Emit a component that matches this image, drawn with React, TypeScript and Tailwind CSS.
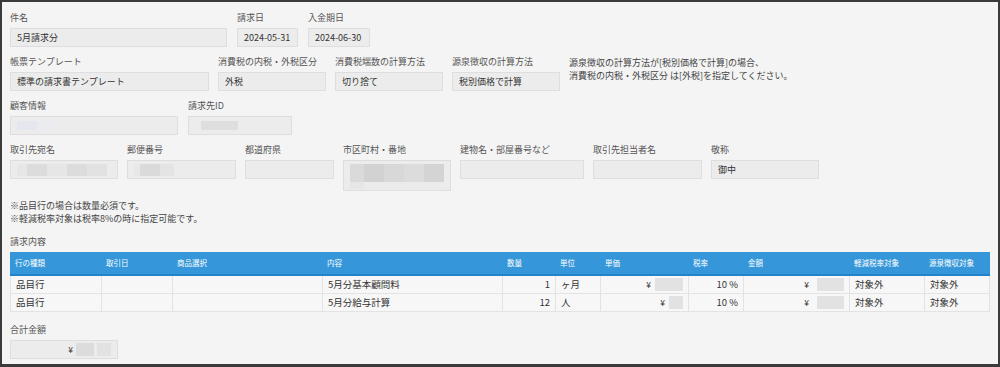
import React from "react";

const font = { fontFamily: '"Noto Sans CJK JP", "Noto Sans", sans-serif' };

function Label({ children }: { children: React.ReactNode }) {
  return <div className="h-[14px] leading-[14px] text-[9px] text-[#555] whitespace-nowrap">{children}</div>;
}

function Field({
  label,
  w,
  children,
  tall,
}: {
  label: string;
  w: string;
  children?: React.ReactNode;
  tall?: boolean;
}) {
  return (
    <div className={`flex flex-col gap-[3px] ${w}`}>
      <Label>{label}</Label>
      <div
        className={`${tall ? "h-[31px] items-start pt-[3px]" : "h-[19px] items-center"} flex bg-[#ececec] border border-[#dedede] px-[6px] text-[9px] text-[#333] whitespace-nowrap overflow-hidden`}
      >
        {children}
      </div>
    </div>
  );
}

function Blur({ w, h, c = "#dcdcdc" }: { w: string; h: string; c?: string }) {
  return <div className={`${w} ${h} shrink-0`} style={{ background: c }} />;
}

const cols = [
  "w-[91px]",
  "w-[71px]",
  "w-[150px]",
  "w-[180px]",
  "w-[53px]",
  "w-[45px]",
  "w-[88px]",
  "w-[55px]",
  "w-[106px]",
  "w-[75px]",
  "flex-1",
];

const headers = [
  "行の種類",
  "取引日",
  "商品選択",
  "内容",
  "数量",
  "単位",
  "単価",
  "税率",
  "金額",
  "軽減税率対象",
  "源泉徴収対象",
];

function Row({ content, qty, unit, short }: { content: string; qty: string; unit: string; short?: boolean }) {
  const cell = "h-full flex items-center px-[5px] border-r border-[#e3e3e3] text-[9.5px] text-[#333] whitespace-nowrap";
  return (
    <div className="flex h-[18px] border-b border-l border-[#e3e3e3] bg-[#f7f7f7]">
      <div className={`${cols[0]} ${cell}`}>品目行</div>
      <div className={`${cols[1]} ${cell}`}></div>
      <div className={`${cols[2]} ${cell}`}></div>
      <div className={`${cols[3]} ${cell}`}>{content}</div>
      <div className={`${cols[4]} ${cell} justify-end`}>{qty}</div>
      <div className={`${cols[5]} ${cell}`}>{unit}</div>
      <div className={`${cols[6]} ${cell} justify-end gap-[4px]`}>
        <span className="text-[8.5px]">¥</span>
        <Blur w={short ? "w-[14px]" : "w-[28px]"} h="h-[13px]" c="#e2e2e2" />
      </div>
      <div className={`${cols[7]} ${cell} justify-end`}>10 %</div>
      <div className={`${cols[8]} ${cell} justify-end gap-[8px]`}>
        <span className="text-[8.5px]">¥</span>
        <Blur w="w-[27px]" h="h-[13px]" c="#e2e2e2" />
      </div>
      <div className={`${cols[9]} ${cell}`}>対象外</div>
      <div className={`${cols[10]} ${cell}`}>対象外</div>
    </div>
  );
}

export default function App() {
  return (
    <div
      className="w-[1000px] h-[367px] bg-[#f4f4f4] border-2 border-b-[3px] border-[#3a3a3a] overflow-hidden pl-[8px] pt-[9px] pr-[8px]"
      style={font}
    >
      {/* Row 1 */}
      <div className="flex gap-[10px]">
        <Field label="件名" w="w-[217px]">5月請求分</Field>
        <Field label="請求日" w="w-[61px]">2024-05-31</Field>
        <Field label="入金期日" w="w-[62px]">2024-06-30</Field>
      </div>

      {/* Row 2 */}
      <div className="flex gap-[9px] mt-[8px]">
        <Field label="帳票テンプレート" w="w-[199px]">標準の請求書テンプレート</Field>
        <Field label="消費税の内税・外税区分" w="w-[108px]">外税</Field>
        <Field label="消費税端数の計算方法" w="w-[108px]">切り捨て</Field>
        <Field label="源泉徴収の計算方法" w="w-[108px]">税別価格で計算</Field>
        <div className="text-[9px] leading-[13px] text-[#444] pt-[1px] whitespace-nowrap">
          <div>源泉徴収の計算方法が[税別価格で計算]の場合、</div>
          <div>消費税の内税・外税区分 は[外税]を指定してください。</div>
        </div>
      </div>

      {/* Row 3 */}
      <div className="flex gap-[10px] mt-[8px]">
        <Field label="顧客情報" w="w-[168px]">
          <div className="flex">
            <Blur w="w-[20px]" h="h-[9px]" c="#e4e8ee" />
            <Blur w="w-[20px]" h="h-[9px]" c="#eaecef" />
          </div>
        </Field>
        <Field label="請求先ID" w="w-[104px]">
          <div className="flex pl-[6px]">
            <Blur w="w-[37px]" h="h-[9px]" c="#dedede" />
          </div>
        </Field>
      </div>

      {/* Row 4 */}
      <div className="flex gap-[9px] mt-[8px] items-start">
        <Field label="取引先宛名" w="w-[108px]">
          <div className="flex">
            <Blur w="w-[10px]" h="h-[12px]" c="#e6e6e6" />
            <Blur w="w-[20px]" h="h-[12px]" c="#dcdcdc" />
            <Blur w="w-[20px]" h="h-[12px]" c="#e6e6e6" />
            <Blur w="w-[20px]" h="h-[12px]" c="#dcdcdc" />
            <Blur w="w-[20px]" h="h-[12px]" c="#e2e2e2" />
          </div>
        </Field>
        <Field label="郵便番号" w="w-[109px]">
          <div className="flex">
            <Blur w="w-[6px]" h="h-[12px]" c="#e8e8e8" />
            <Blur w="w-[20px]" h="h-[12px]" c="#dadada" />
            <Blur w="w-[14px]" h="h-[12px]" c="#e4e4e4" />
          </div>
        </Field>
        <Field label="都道府県" w="w-[89px]"></Field>
        <Field label="市区町村・番地" w="w-[108px]" tall>
          <div className="flex flex-col">
            <div className="flex">
              <Blur w="w-[14px]" h="h-[18px]" c="#dadada" />
              <Blur w="w-[20px]" h="h-[18px]" c="#d2d2d2" />
              <Blur w="w-[20px]" h="h-[18px]" c="#d8d8d8" />
              <Blur w="w-[20px]" h="h-[18px]" c="#dcdcdc" />
              <Blur w="w-[20px]" h="h-[18px]" c="#d4d4d4" />
            </div>
            <div className="flex">
              <Blur w="w-[14px]" h="h-[7px]" c="#e6e6e6" />
              <Blur w="w-[80px]" h="h-[7px]" c="#ebebeb" />
            </div>
          </div>
        </Field>
        <Field label="建物名・部屋番号など" w="w-[124px]"></Field>
        <Field label="取引先担当者名" w="w-[109px]"></Field>
        <Field label="敬称" w="w-[108px]">御中</Field>
      </div>

      {/* Notes */}
      <div className="mt-[8px] text-[9px] leading-[13px] text-[#444]">
        <div>※品目行の場合は数量必須です。</div>
        <div>※軽減税率対象は税率8%の時に指定可能です。</div>
      </div>

      {/* Table */}
      <div className="mt-[10px]">
        <Label>請求内容</Label>
        <div className="mt-[3px] w-[980px]">
          <div className="flex h-[24px] bg-[#3597d9] border-b-2 border-[#1f84cc]">
            {headers.map((h, i) => (
              <div key={h} className={`${cols[i]} flex items-center px-[5px] text-[7.5px] text-white whitespace-nowrap`}>
                {h}
              </div>
            ))}
          </div>
          <Row content="5月分基本顧問料" qty="1" unit="ヶ月" />
          <Row content="5月分給与計算" qty="12" unit="人" short />
        </div>
      </div>

      {/* Total */}
      <div className="mt-[11px]">
        <Field label="合計金額" w="w-[108px]">
          <div className="flex w-full justify-end items-center gap-[3px]">
            <span className="text-[8.5px]">¥</span>
            <Blur w="w-[18px]" h="h-[13px]" c="#dcdcdc" />
            <Blur w="w-[14px]" h="h-[13px]" c="#e2e2e2" />
          </div>
        </Field>
      </div>
    </div>
  );
}
